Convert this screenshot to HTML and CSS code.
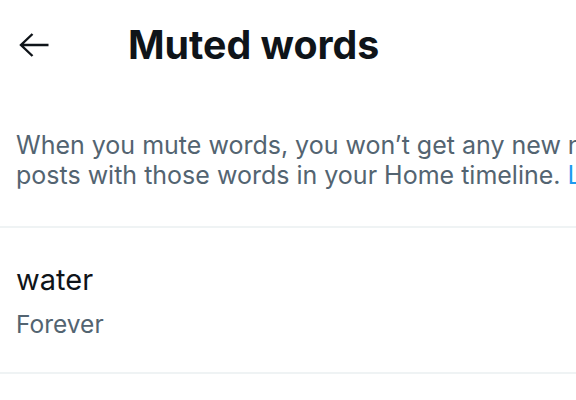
FILE: index.html
```html
<!DOCTYPE html>
<html>
<head>
<meta charset="utf-8">
<link rel="stylesheet" href="styles.css">
</head>
<body>
<div class="page">
  <header class="header">
    <button class="back" aria-label="Back">
      <svg viewBox="0 0 30 24" width="30" height="24"><path d="M2 12 H29.5 M13.5 1 L2 12 L13.5 23" fill="none" stroke="#0f1419" stroke-width="2.4"/></svg>
    </button>
    <h1 class="title">Muted words</h1>
  </header>
  <p class="intro">When you mute words, you won’t get any new notifications for posts that include them or posts with those words in your Home timeline. <a class="link" href="#">Learn more</a></p>
  <div class="item">
    <div class="word">water</div>
    <div class="dur">Forever</div>
  </div>
</div>
</body>
</html>
```
FILE: styles.css
```css
html, body {
  margin: 0;
  padding: 0;
  background: #ffffff;
  overflow: hidden;
}
body {
  width: 576px;
  height: 400px;
  font-family: Inter, "Noto Sans", sans-serif;
  color: #0f1419;
}
.page {
  width: 1140px;
}
.header {
  display: flex;
  align-items: center;
  height: 89px;
  padding: 0 0 0 19px;
}
.back {
  border: 0;
  background: none;
  padding: 0;
  margin: 0 79px 0 0;
  width: 30px;
  height: 24px;
  display: flex;
}
.title {
  margin: 0;
  font-size: 39.3px;
  font-weight: 700;
  line-height: 48px;
}
.intro {
  margin: 0;
  padding: 41px 16px 36px;
  font-size: 25px;
  line-height: 30px;
  color: #536471;
  border-bottom: 2px solid #eff3f4;
}
.link {
  color: #1d9bf0;
  text-decoration: none;
}
.item {
  padding: 34px 16px 31px;
  border-bottom: 2px solid #eff3f4;
}
.word {
  font-size: 29px;
  line-height: 36px;
  color: #0f1419;
}
.dur {
  margin-top: 9px;
  font-size: 24.5px;
  line-height: 34px;
  color: #536471;
}
```
